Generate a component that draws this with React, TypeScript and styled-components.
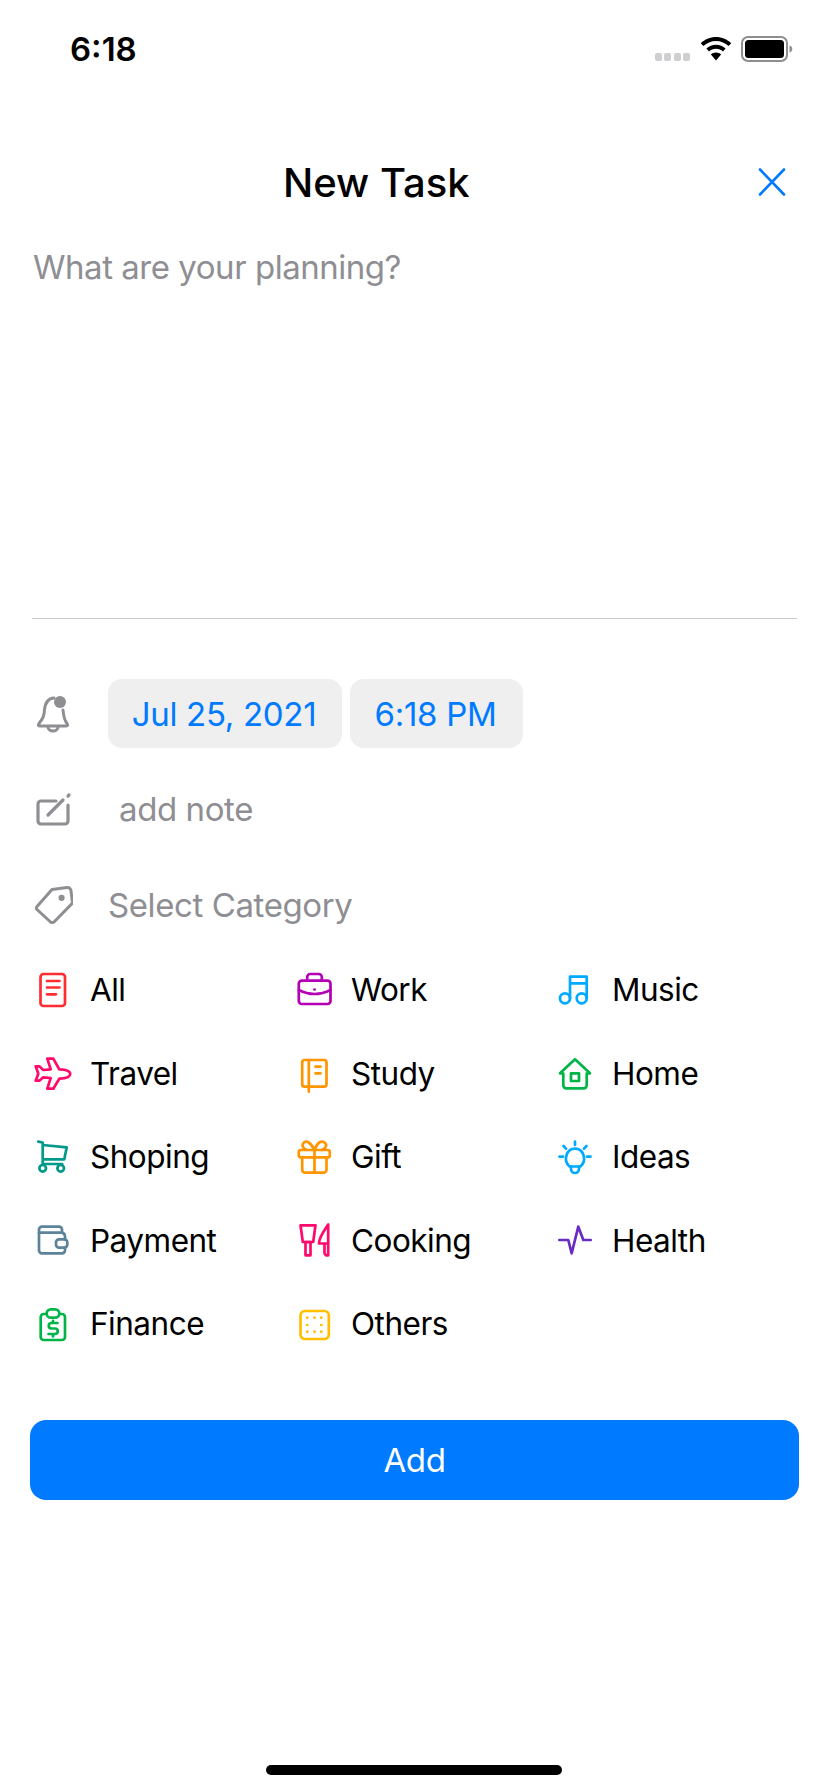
import React from 'react';
import styled, { createGlobalStyle } from 'styled-components';

const GlobalStyle = createGlobalStyle`
	html, body {
		margin: 0;
		padding: 0;
		background: #fff;
	}
	body {
		font-family: Inter, "Liberation Sans", sans-serif;
		-webkit-font-smoothing: antialiased;
	}
`;

const Screen = styled.div`
	box-sizing: border-box;
	display: flex;
	flex-direction: column;
	height: 1792px;
	overflow: hidden;
	width: 828px;
`;
const StatusBar = styled.div`
	align-items: center;
	box-sizing: border-box;
	display: flex;
	height: 100px;
	justify-content: space-between;
	padding: 0 35px 2px 70px;
`;
const Clock = styled.span`
	font-size: 33px;
	font-weight: 600;
	letter-spacing: 0;
`;
const StatusIcons = styled.div`
	align-items: center;
	display: flex;
`;
const SignalDots = styled.div`
	display: flex;
	gap: 2.5px;
	margin: 16px 10px 0 0;
`;
const SignalDot = styled.i`
	background: #cfcfd1;
	border-radius: 2px;
	display: block;
	height: 8px;
	width: 7px;
`;
const Header = styled.header`
	align-items: center;
	box-sizing: border-box;
	display: flex;
	height: 80px;
	justify-content: space-between;
	margin-top: 42px;
	padding: 0 42px 0 283px;
`;
const Title = styled.h1`
	color: #000;
	font-size: 40px;
	font-weight: 500;
	letter-spacing: 0;
	margin: 0;
`;
const TaskArea = styled.div`
	box-sizing: border-box;
	color: #8e8e93;
	font-size: 33px;
	height: 396px;
	letter-spacing: -0.47px;
	line-height: 44px;
	padding: 23px 33px 0;
`;
const Divider = styled.hr`
	background: #c9c9cc;
	border: 0;
	height: 1px;
	margin: 0 31px 0 32px;
`;
const ReminderRow = styled.div`
	align-items: center;
	display: flex;
	height: 69px;
	margin-top: 60px;
	padding-left: 33px;
`;
const Chip = styled.button<{ $width: number; $gap: number }>`
	background: #efeff0;
	border: 0;
	border-radius: 14px;
	color: #007aff;
	font-family: inherit;
	font-size: 33px;
	height: 69px;
	letter-spacing: -0.3px;
	margin-left: ${(p) => p.$gap}px;
	padding: 0 2px 0 0;
	width: ${(p) => p.$width}px;
`;
const FormRow = styled.div<{ $top: number }>`
	align-items: center;
	color: #8e8e93;
	display: flex;
	font-size: 33px;
	height: 60px;
	letter-spacing: -0.4px;
	margin-top: ${(p) => p.$top}px;
	padding-left: 33px;
`;
const RowLabel = styled.span<{ $indent: number }>`
	margin-left: ${(p) => p.$indent}px;
`;
const CategoryGrid = styled.div`
	display: grid;
	grid-auto-rows: 83.5px;
	grid-template-columns: repeat(3, 261px);
	margin-top: 13px;
	padding-left: 33px;
`;
const Category = styled.div`
	align-items: center;
	color: #000;
	display: flex;
	font-size: 31.5px;
	gap: 17px;
	letter-spacing: -0.5px;
`;
const Icon = styled.svg<{ $color: string; $weight?: number }>`
	color: ${(p) => p.$color};
	display: block;
	fill: none;
	flex: none;
	height: 40px;
	stroke: currentColor;
	stroke-linecap: round;
	stroke-linejoin: round;
	stroke-width: ${(p) => p.$weight ?? 2.7};
	width: 40px;
`;
const AddButton = styled.button`
	background: #007aff;
	border: 0;
	border-radius: 16px;
	color: #fff;
	font-family: inherit;
	font-size: 33px;
	height: 80px;
	letter-spacing: -0.4px;
	margin: 54px 29px 0 30px;
	padding: 0;
`;
const HomeIndicator = styled.div`
	background: #000;
	border-radius: 5px;
	height: 10px;
	margin: auto auto 17px;
	width: 296px;
`;

const box = '0 0 40 40';
const GREY = '#8e8e93';
const ORANGE = '#ff9500';
const PINK = '#ff0a6c';
const GREEN = '#00b548';
const SKY = '#00aaff';

const categories: { label: string; color: string; shape: React.ReactNode }[] = [
	{
		label: 'All',
		color: '#ff2d30',
		shape: (
			<>
				<rect x="7.5" y="4" width="24.5" height="32" rx="3" />
				<path d="M14 11h12.5M14 17.5h12.5M14 24.3h9" />
			</>
		),
	},
	{
		label: 'Work',
		color: '#b400b4',
		shape: (
			<>
				<rect x="4.8" y="10.7" width="31.7" height="23.3" rx="3" />
				<path d="M13.2 10.7V7a3 3 0 0 1 3-3h8.6a3 3 0 0 1 3 3v3.7" />
				<path d="M4.8 20Q20.5 28 36.5 20" />
				<path d="M20.5 19.5h.1" />
			</>
		),
	},
	{
		label: 'Music',
		color: SKY,
		shape: (
			<>
				<circle cx="10" cy="28.3" r="5" />
				<circle cx="26.7" cy="28.3" r="5" />
				<path d="M15 28.3V6.7h16.7v21.6M15 13.3h16.7" />
			</>
		),
	},
	{
		label: 'Travel',
		color: PINK,
		shape: (
			<path d="M37.3 20.8C37.3 18 33 16.5 26.3 16.3L20.3 5.7h-6l3.4 10.6-7.4.7-4-3.7H2.7l2.6 7.4-2.6 7h3.6l4-3.4 7.4.7-3.4 10.7h6l6-10c6.7-.3 11-1.9 11-4.9z" />
		),
	},
	{
		label: 'Study',
		color: ORANGE,
		shape: (
			<>
				<rect x="8.2" y="7" width="24.3" height="26.7" rx="2.5" />
				<path d="M14.8 7v31.7M21.5 13.7h5M21.5 20.3h5" />
			</>
		),
	},
	{
		label: 'Home',
		color: GREEN,
		shape: (
			<>
				<path d="M5 20.3 20 6.3l15 14h-3.3v12a3 3 0 0 1-3 3H11.3a3 3 0 0 1-3-3v-12z" />
				<rect x="16" y="20.3" width="8" height="7.7" />
			</>
		),
	},
	{
		label: 'Shoping',
		color: '#00998a',
		shape: (
			<>
				<path d="M5.3 4.7l4.4.8V27h19.5M9.7 8l24 2.3-2.4 12H9.7" />
				<circle cx="9.7" cy="31.3" r="3.3" />
				<circle cx="27.7" cy="31.3" r="3.3" />
			</>
		),
	},
	{
		label: 'Gift',
		color: ORANGE,
		shape: (
			<>
				<rect x="4.8" y="13" width="31" height="7.3" rx="2" />
				<path d="M8.2 20.3v12.4a3 3 0 0 0 3 3h18.3a3 3 0 0 0 3-3V20.3M20.5 13v22.7" />
				<path d="M20.5 13c-4-8-8-9.5-10.5-7.5S8.5 12 13 13M20.5 13c3-8 7-9.5 10-7.5s1.5 6.500-3 7.500" />
			</>
		),
	},
	{
		label: 'Ideas',
		color: SKY,
		shape: (
			<>
				<path d="M14.500 29.500C8 24 11 11.600 20 11.600S32 24 25.500 29.500z" />
				<path d="M16 29.500v2.500a4 4 0 0 0 8 0v-2.500" />
				<path d="M20 4.700V8M4.500 19.700h3.500M32 19.700h3.500M8.500 9l2.500 2.700M31.500 9 29 11.700" />
			</>
		),
	},
	{
		label: 'Payment',
		color: '#5c8499',
		shape: (
			<>
				<path d="M32 19.300v-2.700a4 4 0 0 0-3-4V9.600a3 3 0 0 0-3-3H9a3 3 0 0 0-3 3v20.700a3 3 0 0 0 3 3h20a3 3 0 0 0 3-3v-2.700" />
				<path d="M6 12.600h23" />
				<rect x="23" y="19.300" width="11.300" height="8.300" rx="3" />
			</>
		),
	},
	{
		label: 'Cooking',
		color: PINK,
		shape: (
			<>
				<path d="M6.500 5.300h15L19.200 22H8.800z" />
				<rect x="11.500" y="22" width="5" height="13.300" />
				<path d="M34.200 4.600V35.300M34.200 4.600C30 11 25 17 25 23.500h9.200M30.500 23.500v9a2.800 2.800 0 0 0 3.700 2.800" />
			</>
		),
	},
	{
		label: 'Health',
		color: '#6a2bc4',
		shape: <path d="M4.300 20h9l3.400 13.300L23.300 6.600 28.300 20h7.400" />,
	},
	{
		label: 'Finance',
		color: GREEN,
		shape: (
			<>
				<path d="M13.700 10H10.700a3 3 0 0 0-3 3v20a3 3 0 0 0 3 3H29a3 3 0 0 0 3-3V13a3 3 0 0 0-3-3h-2.700" />
				<rect x="13.700" y="5.300" width="12.600" height="8.400" rx="4.200" />
				<path d="M24.500 19h-6a2.600 2.600 0 0 0 0 5.500h3.500a2.600 2.600 0 0 1 0 5.500h-6.500M20 16.800v2M20 30v2.400" />
			</>
		),
	},
	{
		label: 'Others',
		color: '#ffbf00',
		shape: (
			<>
				<rect x="6.500" y="7" width="28.300" height="28" rx="4.500" />
				<path d="M13.200 13.700h.1M20.500 13.700h.1M27.200 13.700h.1M13.200 21h.1M27.200 21h.1M13.200 27.700h.1M20.500 27.700h.1M27.200 27.700h.1" />
			</>
		),
	},
];

const App: React.FC = () => {
	return (
		<Screen>
			<GlobalStyle />
			<StatusBar>
				<Clock>6:18</Clock>
				<StatusIcons>
					<SignalDots>
						<SignalDot />
						<SignalDot />
						<SignalDot />
						<SignalDot />
					</SignalDots>
					<svg width="32" height="24" viewBox="0 0 32 24">
						<path
							fill="#000"
							d="M16 0C10 0 4.800 2.400.8 6.200L3.400 9C6.700 5.900 11.100 3.900 16 3.900S25.300 5.900 28.600 9l2.600-2.800C27.200 2.400 22 0 16 0zM16 7.800c-3.700 0-7 1.400-9.600 3.800L9 14.400c1.900-1.700 4.300-2.700 7-2.700s5.100 1 7 2.700l2.600-2.800C23 9.200 19.700 7.800 16 7.800zM16 15.600c-2 0-3.700.7-5.100 1.900L16 23.500l5.100-6c-1.400-1.200-3.100-1.900-5.100-1.900z"
						/>
					</svg>
					<svg width="52" height="26" viewBox="0 0 52 26" style={{ marginLeft: 9 }}>
						<rect x="1" y="1" width="45" height="24" rx="6" fill="none" stroke="#8e8e8e" strokeWidth="2" />
						<rect x="4" y="4" width="39" height="18" rx="3.500" fill="#000" />
						<path d="M48.500 9.500c1.800.6 2.800 1.800 2.800 3.500s-1 2.900-2.800 3.500z" fill="#8e8e8e" />
					</svg>
				</StatusIcons>
			</StatusBar>
			<Header>
				<Title>New Task</Title>
				<svg width="28" height="28" viewBox="0 0 28 28" fill="none" stroke="#007aff" strokeWidth="2.600" strokeLinecap="round">
					<path d="M2 1.500l24 25M26 1.500l-24 25" />
				</svg>
			</Header>
			<TaskArea>What are your planning?</TaskArea>
			<Divider />
			<ReminderRow>
				<Icon $color={GREY} $weight={3} viewBox={box}>
					<path d="M21 4C14 4.500 12 10 11.500 16 11 23 9.500 25 6 29.500c-1 1.500-1 2.500 1 2.500h26c2 0 2-1 1-2.500-3-4-3.500-7-4-13.500" />
					<path d="M15 33a5 4 0 0 0 10 0" />
					<circle cx="27" cy="8" r="6" fill={GREY} stroke="none" />
				</Icon>
				<Chip $width={234} $gap={35}>Jul 25, 2021</Chip>
				<Chip $width={173} $gap={8}>6:18 PM</Chip>
			</ReminderRow>
			<FormRow $top={31}>
				<Icon $color={GREY} $weight={3.2} viewBox={box}>
					<path d="M23 12H8a3 3 0 0 0-3 3v17a3 3 0 0 0 3 3h24a3 3 0 0 0 3-3V16" />
					<path d="M15 26 30 11M35 7l1-1" />
				</Icon>
				<RowLabel $indent={46}>add note</RowLabel>
			</FormRow>
			<FormRow $top={36}>
				<Icon $color={GREY} $weight={3} viewBox={box}>
					<path d="M19 4.500 34 2.500a3.500 3.500 0 0 1 4 3.500l1.500 12L21.500 36.500a3 3 0 0 1-4.500 0L4 24.500a2 2 0 0 1 0-3z" />
					<circle cx="28.600" cy="12.800" r="1.600" fill={GREY} />
				</Icon>
				<RowLabel $indent={35}>Select Category</RowLabel>
			</FormRow>
			<CategoryGrid>
				{categories.map((item) => (
					<Category key={item.label}>
						<Icon $color={item.color} viewBox={box}>
							{item.shape}
						</Icon>
						{item.label}
					</Category>
				))}
			</CategoryGrid>
			<AddButton>Add</AddButton>
			<HomeIndicator />
		</Screen>
	);
};

export default App;
